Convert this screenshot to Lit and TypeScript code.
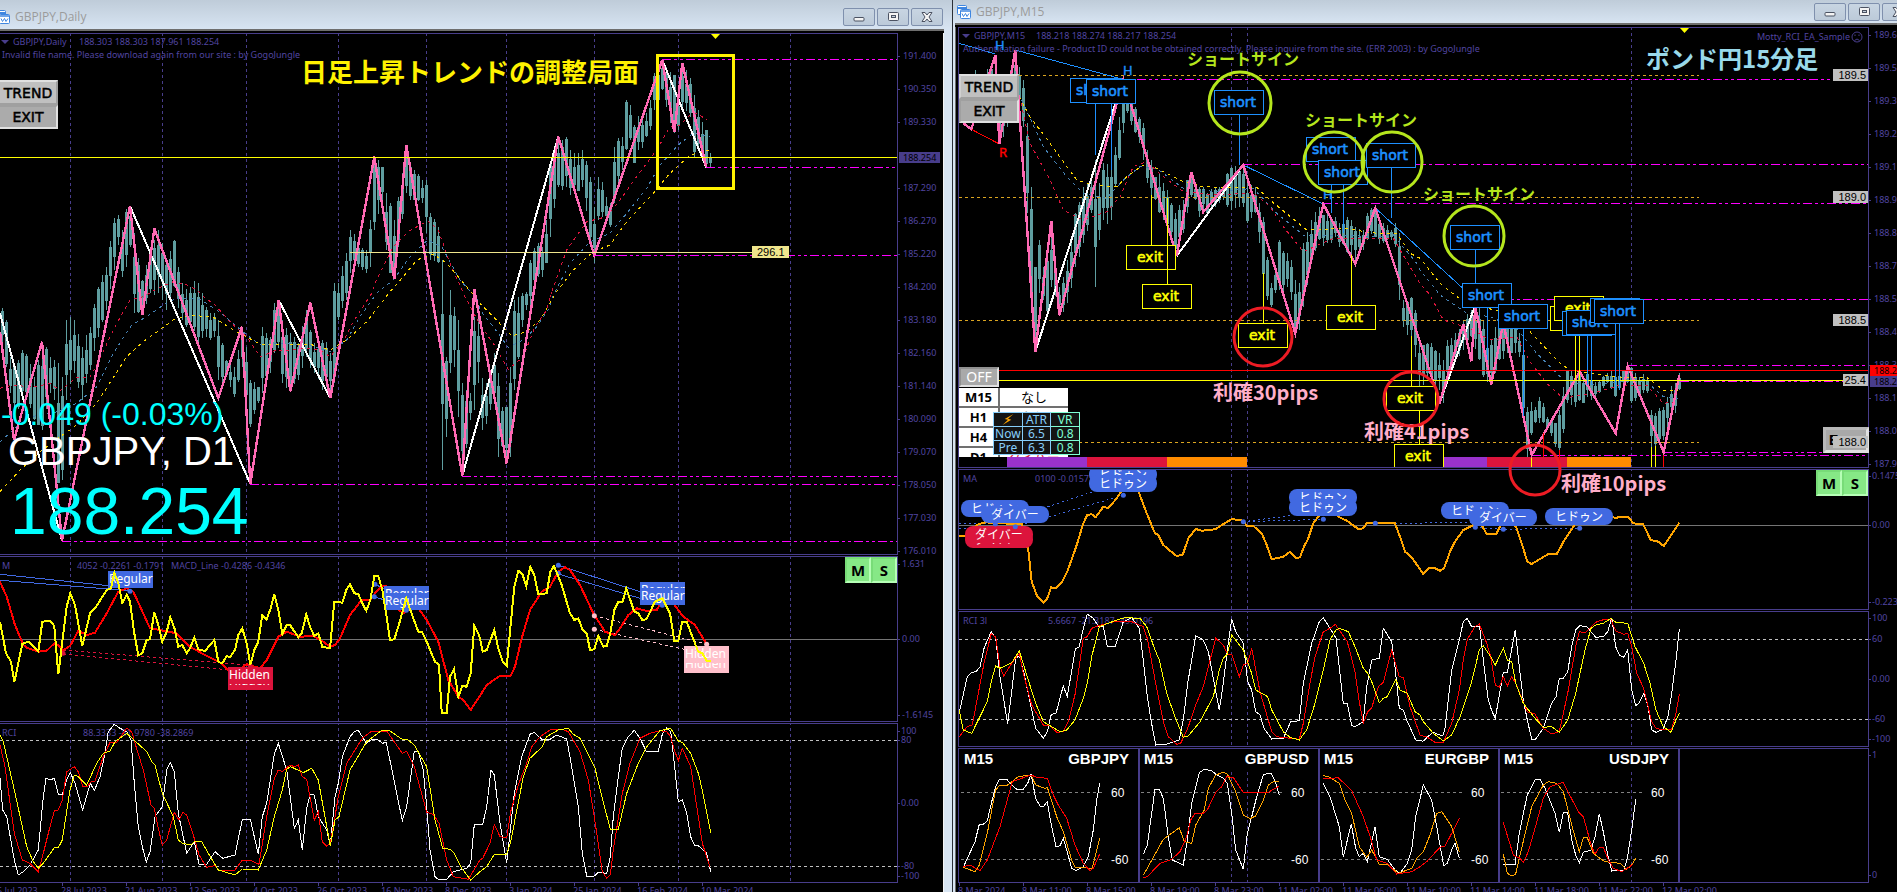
import { LitElement, html, svg, css } from "lit";
import { customElement, property } from "lit/decorators.js";

type Pt = [number, number];

/* Series are stored in thirds of a pixel, relative to an origin in pixels. */
const seg = (ox: number, oy: number, data: string): Pt[] =>
  data
    .trim()
    .split(/\s+/)
    .map((p) => {
      const [x, y] = p.split(",").map(Number);
      return [ox + x / 3, oy + y / 3] as Pt;
    });
const join = (...parts: Pt[][]) =>
  parts
    .flat()
    .map((p) => p[0].toFixed(1) + "," + p[1].toFixed(1))
    .join(" ");
const line = (cls: string, ...parts: Pt[][]) =>
  svg`<polyline class=${"series " + cls} points=${join(...parts)}></polyline>`;
const px = (v: number) => Math.floor(v) + 0.5;
const hline = (cls: string, y: number, x1: number, x2: number) =>
  svg`<line class=${"rule " + cls} x1=${x1} x2=${x2} y1=${px(y)} y2=${px(y)}></line>`;
const vline = (cls: string, x: number, y1: number, y2: number) =>
  svg`<line class=${"rule " + cls} x1=${px(x)} x2=${px(x)} y1=${y1} y2=${y2}></line>`;
const label = (cls: string, x: number, y: number, text: string) =>
  svg`<text class=${cls} x=${x} y=${y}>${text}</text>`;
const dot = (cls: string, p: Pt) => svg`<circle class=${cls} cx=${p[0]} cy=${p[1]} r="2.5"></circle>`;
const at = (ox: number, oy: number, x: number, y: number): Pt => [ox + x / 3, oy + y / 3];

const noise = (n: number) => {
  const s = Math.sin(n * 12.9898) * 43758.5453;
  return s - Math.floor(s);
};

/* Builds candle shapes from x,high,low samples at a 4px pitch. */
const candles = (ox: number, data: string) => {
  const rows = data.trim().split(/\s+/).map((r) => r.split(",").map(Number));
  let d = "";
  let i = 0;
  for (let x = rows[0][0]; x <= rows[rows.length - 1][0]; x += 12) {
    while (i < rows.length - 2 && rows[i + 1][0] <= x) i++;
    const a = rows[i];
    const b = rows[i + 1];
    const t = Math.min(1, (x - a[0]) / (b[0] - a[0]));
    const wob = t > 0 && t < 1 ? (noise(x) - 0.5) * 30 : 0;
    const hi = (a[1] + (b[1] - a[1]) * t + wob) / 3;
    const lo = (a[2] + (b[2] - a[2]) * t + wob) / 3;
    const h = lo - hi;
    const top = hi + h * noise(x + 5) * 0.34;
    const bot = lo - h * noise(x + 9) * 0.32;
    const cx = Math.floor(ox + x / 3);
    d += `M${cx},${Math.round(hi)}h1V${Math.round(lo)}h-1z`;
    d += `M${cx - 1},${Math.round(top)}h3V${Math.max(Math.round(top) + 1, Math.round(bot))}h-3z`;
  }
  return svg`<path class="candle" d=${d}></path>`;
};

/* ---------- daily chart ---------- */

const D_GRID = [70, 162, 246, 338, 426, 506, 594, 678, 790];
const D_CANDLES = `7,925,1040 19,960,1100 31,1070,1180 43,1090,1250 67,1050,1180 103,1130,1260 127,1030,1290
 151,1070,1180 163,1080,1200 175,1090,1450 187,1130,1440 199,960,1200 223,960,1120 247,1040,1200 271,980,1110
 295,860,1010 319,800,930 343,655,810 355,645,735 367,690,830 379,628,800 391,620,740 403,700,940
 427,840,930 451,740,880 475,690,880 499,780,930 523,720,860 547,850,960 571,860,980 595,850,1030
 619,920,1010 643,940,1010 655,960,1140 679,1080,1130 703,1100,1190 727,1000,1100 739,1040,1200 751,1140,1280
 775,1160,1210 787,980,1180 811,1010,1120 823,910,1060 835,905,1045 847,960,1150 871,1000,1170 895,1030,1140
 919,930,1070 943,1030,1120 967,1020,1170 991,1060,1180 1003,850,1150 1015,850,960 1039,760,900
 1051,690,820 1075,740,800 1099,750,820 1111,660,800 1123,470,690 1147,500,600 1159,580,750 1171,610,820
 1183,660,820 1195,590,740 1219,450,580 1243,510,600 1267,540,610 1279,540,700 1291,640,780 1315,680,790
 1327,780,1410 1339,1070,1310 1351,870,1120 1363,920,1100 1375,960,1250 1387,1150,1420 1411,1180,1260 1423,950,1230
 1435,940,1150 1447,1135,1290 1471,1140,1230 1483,1060,1180 1495,1120,1370 1507,1220,1340 1519,1220,1380
 1531,1100,1370 1543,900,1170 1567,880,980 1579,875,930 1591,780,930 1615,730,830 1627,740,830
 1639,660,790 1651,490,710 1675,410,560 1699,410,560 1723,460,580 1747,450,560 1771,530,720 1783,620,790
 1795,530,660 1819,590,670 1831,610,680 1843,440,610 1867,410,510 1879,300,450 1891,315,420 1903,375,490
 1939,340,410 1951,300,390 1963,220,330 1987,185,270 2011,215,370 2023,225,400 2035,310,390 2047,200,330
 2071,235,350 2083,285,470 2095,330,450 2119,390,500 2131,460,500`;

const dailyMain = () => svg`
  ${D_GRID.map((x) => vline("grid", x, 33, 556))}
  ${candles(0, D_CANDLES)}
  ${line("ma red", seg(0, 290, "0,295 40,285 100,292 150,280 180,302 230,262 270,262 300,205 345,110 390,30 430,20 460,3"), seg(0, 0, "480,862 520,845 560,855 590,870 618,897"), seg(0, 290, "640,40 700,105 740,140 780,200 830,180 880,180 920,175 960,180 990,200 1030,155 1060,95 1115,10"), seg(0, 0, "1125,850 1180,740 1225,695 1283,662 1315,690 1350,790 1395,890"), seg(0, 290, "1435,95"), seg(480, 290, "0,105 40,160 85,238 130,200 165,110 200,60 215,5"), seg(480, 0, "210,890 260,750 320,665 380,650 420,600 470,530 530,450 570,380 600,375 635,340 655,342 680,360"))}
  ${line("ma blue", seg(0, 290, "0,455 50,410 110,375 160,370 230,340 290,290 340,190 395,105 440,80 490,45 530,25 600,28 650,60 700,100 740,135 780,165 850,160 930,165 990,185 1040,150 1080,80 1130,10"), seg(0, 0, "1135,875 1180,840 1230,770 1283,720 1325,740 1380,840 1430,895"), seg(480, 290, "0,60 40,110 85,172 130,150 170,110 210,50"), seg(480, 0, "215,895 270,790 330,725 390,700 440,640 500,565 540,495 600,430 640,400 690,410"))}
  ${line("ma gold", seg(0, 290, "0,605 60,540 115,490 160,455 230,405 290,340 380,200 430,155 520,90 570,75 640,82 700,120 780,162 850,162 930,163 990,180 1040,150 1100,95 1170,5"), seg(0, 0, "1210,830 1250,780 1300,762 1340,790 1400,860"), seg(480, 290, "0,40 40,80 95,138 140,125 180,90 230,5"), seg(480, 0, "280,810 340,755 390,735 440,665 520,580 570,520 630,465 690,450"))}
  ${line("white2", seg(0, 290, "0,70 186,752"))}
  ${line("white2", seg(0, 0, "390,618"), seg(0, 290, "751,582"))}
  ${line("white2", seg(0, 290, "836,31 991,324"))}
  ${line("white2", seg(0, 290, "1387,557"), seg(480, 0, "235,410"))}
  ${line("white2", seg(480, 0, "547,180 679,502"))}
  ${line("zig", seg(0, 290, "0,125 42,450 126,155 186,752"), seg(0, 0, "390,618"), seg(0, 290, "427,76"), seg(0, 0, "463,686"), seg(0, 290, "655,324 726,110 751,582 836,31 871,304 931,38 991,324"), seg(0, 0, "1123,470 1183,838 1219,434"), seg(0, 290, "1387,557"), seg(0, 0, "1423,868"), seg(480, 290, "80,520"), seg(480, 0, "235,410 343,766 547,180 583,397 607,190 679,502"))}
  ${hline("magenta", 59, 662, 898)} ${hline("magenta", 167, 706, 898)}
  ${hline("magenta", 255, 594, 898)} ${hline("magenta", 476, 462, 898)}
  ${hline("magenta", 484, 250, 898)} ${hline("magenta", 541, 62, 898)}
  ${hline("khaki", 252, 350, 752)}
  ${hline("yellow", 157, 0, 898)}
  <rect class="tag-khaki" x="752" y="246" width="37" height="12"></rect>
  ${label("arial11 black", 757, 256, "296.1")}
  <path class="fill-yellow" d="M711,34h9l-4.500,5z"></path>
  <path class="fill-dim" d="M1,40h8l-4,4z"></path>
  ${label("tiny", 13, 45, "GBPJPY,Daily")}
  ${label("tiny", 79, 45, "188.303 188.303 187.961 188.254")}
  ${label("tiny", 2, 58, "Invalid file name. Please download again from our site : by GogoJungle")}
  ${label("quote32 cyan", 1, 425, "-0.049 (-0.03%)")}
  ${label("quote40 white", 8, 465, "GBPJPY, D1")}
  ${label("quote66 cyan", 10, 534, "188.254")}`;

const tagBox = (cls: string, x: number, y: number, text: string) => svg`
  <rect class=${cls} x=${x} y=${y} width="45" height="17"></rect>
  ${label("noto12 white", x + 1, y + 12, text)}`;

const dailyMacd = () => svg`
  ${D_GRID.map((x) => vline("grid", x, 556, 722))}
  ${hline("zero", 639, 0, 898)}
  ${line("s-royal", seg(0, 550, "0,73 355,110"))} ${line("s-royal", seg(0, 550, "0,91 390,122"))}
  ${line("s-royal", seg(0, 550, "1123,103 1170,122"))} ${line("s-royal", seg(0, 550, "1123,140 1170,155"))}
  ${line("s-royal", seg(480, 550, "235,46 480,125"))} ${line("s-royal", seg(480, 550, "235,72 490,148"))}
  ${line("s-crim", seg(0, 550, "190,300 740,345"))} ${line("s-crim", seg(0, 550, "190,312 690,360"))}
  ${line("s-pink", seg(480, 550, "343,197 680,283"))} ${line("s-pink", seg(480, 550, "343,238 612,298"))}
  ${line("red2", seg(0, 550, "0,95 20,140 45,225 70,285 80,293 115,305 140,302 165,278 190,300 210,288 235,243 262,255 285,248 320,190 355,125 380,115 400,125 425,180 450,235 490,242 530,250 570,290 620,318 665,340 685,360 710,365 740,343 780,355 800,330 835,260 860,245 900,260 940,258 970,275 990,290 1005,285 1020,265 1050,195 1085,150 1110,150 1125,130 1147,107 1165,110 1190,175 1210,190 1230,175 1255,175 1280,210 1315,275 1345,390 1375,440 1390,450 1412,480"), seg(480, 550, "0,437 20,405 60,377 92,377 105,350 125,265 150,180 185,125 210,110 235,65 255,52 270,60 300,105 340,190 375,245 405,255 420,235 445,195 470,175 500,183 530,180 545,155 580,160 610,200 645,225 680,283"))}
  ${tagBox("f-royal", 108, 571, "Regular")}
  ${tagBox("f-royal", 384, 586, "Regular")} ${tagBox("f-royal", 384, 593, "Regular")}
  ${tagBox("f-royal", 640, 582, "Regular")} ${tagBox("f-royal", 640, 588, "Regular")}
  ${tagBox("f-crim", 228, 673, "Hidden")} ${tagBox("f-crim", 228, 667, "Hidden")}
  ${tagBox("f-pink", 684, 656, "Hidden")} ${tagBox("f-pink", 684, 646, "Hidden")}
  ${[at(0, 550, 390, 124), at(0, 550, 1125, 103), at(0, 550, 1123, 140), at(0, 550, 1219, 181), at(480, 550, 235, 46), at(480, 550, 235, 70), at(480, 550, 547, 166)].map((p) => dot("f-royal", p))}
  ${[at(480, 550, 343, 197), at(480, 550, 343, 238), at(480, 550, 680, 283)].map((p) => dot("f-pink", p))}
  ${[at(0, 550, 189, 310), at(0, 550, 751, 348)].map((p) => dot("f-crim", p))}
  ${line("yel2", seg(0, 550, "0,215 18,310 33,335 43,397 67,282 85,275 115,305 127,215 150,212 163,228 175,373 200,170 211,130 225,165 247,288 271,187 285,175 320,120 333,115 343,68 355,100 367,158 380,135 390,155 403,250 415,316 427,310 440,270 450,268 463,187 475,225 487,275 500,245 511,202 525,240 535,290 547,285 560,310 570,295 583,263 595,298 615,303 643,270 655,335 667,340 680,318 690,322 705,300 715,255 727,235 740,280 751,345 763,300 775,275 787,195 800,208 812,175 823,133 835,180 847,252 860,225 870,225 895,262 905,250 919,193 930,230 943,258 955,250 967,290 990,295 1003,155 1027,158 1039,120 1050,103 1063,130 1075,132 1087,160 1099,182 1111,150 1123,78 1135,78 1147,120 1159,195 1170,270 1183,268 1195,230 1219,145 1231,180 1255,245 1267,247 1280,275 1305,335 1317,345 1325,488 1340,488 1350,380 1362,358 1375,440 1387,408 1400,410 1412,370 1423,228 1435,250"), seg(480, 550, "0,265 8,305 20,300 43,240 55,295 67,332 80,348 103,110 115,62 127,72 139,108 151,50 163,75 175,133 200,130 211,65 222,48 245,105 270,190 283,210 295,205 307,237 320,250 330,300 343,298 355,258 370,290 380,288 391,250 403,180 415,155 428,155 439,115 463,185 475,190 487,210 499,208 525,155 547,145 570,190 583,272 595,272 607,215 620,215 643,275 655,305 667,310 680,332 692,332"))}
  ${label("tiny", 2, 569, "M")}
  ${label("tiny", 77, 569, "4052 -0.2261 -0.1791")}
  ${label("tiny", 171, 569, "MACD_Line -0.4286 -0.4346")}`;

const dailyRci = () => svg`
  ${D_GRID.map((x) => vline("grid", x, 722, 884))}
  ${label("tiny", 2, 736, "RCI")} ${label("tiny", 83, 736, "88.3333 -81.9780 -38.2869")}
  ${hline("level", 740, 0, 898)} ${hline("level", 866, 0, 898)}
  ${line("white1", seg(0, 550, "0,685 8,780 20,800 43,930 55,975 70,965 90,945 115,900 130,740 138,685 150,690 163,685 175,733 187,733 200,690 211,668 225,700 248,780 271,700 283,722 300,680 313,620 325,545 343,523 360,535 380,545 393,570 403,700 415,830 427,890 439,937 450,905 465,800 487,770 500,660 511,638 523,665 535,790 560,910 583,875 597,943 620,943 645,905 668,925 705,915 727,808 751,808 775,913 787,800 800,760 823,612 835,580 860,660 883,835 895,810 907,900 920,775 931,733 943,735 955,800 980,840 991,885 1005,740 1015,700 1027,620 1050,560 1063,545 1075,541 1099,580 1115,568 1135,570 1147,580 1159,577 1207,812 1220,770 1243,603 1255,605 1270,660 1280,770 1290,900 1305,980 1317,990 1340,988 1360,965 1400,955 1412,940 1423,823 1440,823"), seg(480, 550, "8,823 20,770 33,660 43,675 60,820 80,940 103,730 125,620 150,553 163,547 185,568 210,568 230,555 260,567 275,650 295,770 307,910 320,978 343,978 355,967 380,970 391,920 400,800 415,680 427,595 445,560 463,541 480,565 499,604 535,604 547,553 560,533 572,545 585,660 595,755 607,750 620,790 632,860 643,885 655,887 680,910 692,965"))}
  ${line("red1", seg(0, 550, "0,585 15,650 43,850 67,930 90,940 115,965 130,910 150,830 163,783 175,780 187,750 200,665 223,650 235,665 248,710 262,710 275,693 285,693 310,620 330,577 350,577 380,535 395,545 405,580 430,660 453,765 463,775 475,835 487,885 500,870 523,787 537,810 548,787 560,795 583,865 597,915 620,952 645,947 660,963 705,960 727,930 751,930 777,943 800,800 823,685 835,660 847,665 870,645 883,650 895,645 907,680 920,688 943,810 955,785 967,875 980,888 991,880 1005,800 1015,740 1040,640 1087,565 1115,543 1160,543 1207,610 1220,603 1243,650 1280,787 1300,793 1317,820 1340,930 1360,980 1405,988 1440,930"), seg(480, 550, "8,925 30,880 43,823 60,860 80,863 92,785 115,705 140,640 155,590 180,560 210,540 245,537 265,545 300,605 325,690 343,800 367,965 380,985 391,975 400,900 427,730 450,640 480,565 510,550 540,542 560,545 572,560 583,600 595,632 607,595 632,650 655,800 667,880 690,950"))}
  ${line("yel1", seg(0, 550, "0,555 10,575 43,720 80,890 100,935 115,955 130,940 163,893 175,893 187,870 210,720 223,675 235,680 260,705 290,640 310,610 330,603 345,575 380,550 400,568 440,605 455,635 465,645 487,730 520,800 535,870 548,880 572,885 583,875 605,875 625,910 655,960 705,975 727,957 775,960 800,900 823,800 847,720 860,657 872,650 910,668 935,655 955,690 991,888 1005,810 1017,800 1050,660 1100,575 1145,541 1170,543 1205,567 1220,567 1243,585 1280,650 1305,810 1328,895 1350,898 1362,910 1385,955 1412,990 1440,965"), seg(480, 550, "20,950 43,913 80,913 92,875 130,680 150,625 187,590 200,560 235,540 265,535 280,553 300,565 345,655 367,745 391,838 415,838 440,730 475,640 500,590 540,542 572,535 595,573 607,577 632,610 655,670 667,720 692,848"))}`;

/* ---------- 15 minute chart ---------- */

const M_GRID = [1231, 1247, 1631];
const M_CANDLES = `76,210,340 88,230,350 100,240,330 124,200,290 148,240,420 172,250,380 196,190,300 208,200,300
 220,240,380 232,370,640 244,560,890 256,800,1030 268,720,880 280,800,900 292,780,950
 304,700,860 328,860,940 352,780,910 376,640,800 400,560,730 424,530,640 436,480,860 448,550,720 460,490,660
 484,470,660 496,440,560 508,350,480 520,300,400 532,270,340 556,320,400 568,350,430 580,370,480 592,450,550
 604,480,590 616,530,600 628,520,640 640,550,660 652,570,700 664,610,710 676,640,770 700,600,700 712,540,640
 724,530,590 736,560,600 748,560,650 772,580,640 796,560,620 820,560,600 832,520,620 844,500,630 868,500,620
 880,510,620 892,550,670 916,560,640 928,610,730 940,650,850 952,770,900 964,850,920 976,810,880 988,720,870
 1012,760,860 1024,780,900 1036,840,980 1048,850,990 1060,730,920 1084,660,790 1108,620,720 1132,640,730
 1156,650,710 1168,670,740 1192,650,760 1216,680,780 1240,690,750 1252,640,720 1276,630,710 1300,670,730
 1324,690,720 1336,670,740 1348,700,900 1360,900,980 1384,890,1010 1396,930,1070 1408,1020,1160 1432,1030,1130
 1444,1030,1140 1468,1060,1170 1480,1080,1210 1492,1020,1130 1516,1000,1070 1540,960,1050 1564,930,1010
 1588,920,1080 1600,960,1130 1624,1020,1150 1648,930,1080 1672,950,1060 1684,950,1060 1708,1000,1070
 1720,1060,1260 1732,1220,1370 1756,1220,1270 1768,1190,1270 1792,1250,1290 1816,1270,1340 1828,1230,1360
 1840,1160,1300 1852,1110,1210 1876,1110,1220 1900,1130,1210 1924,1140,1200 1948,1140,1180 1972,1120,1150
 1996,1110,1190 2020,1110,1150 2032,1100,1150 2044,1100,1210 2068,1130,1190 2092,1130,1180 2104,1230,1340
 2116,1240,1340 2140,1220,1320 2152,1190,1280 2176,1150,1240 2188,1120,1170`;

const signal = (kind: "short" | "exit", x: number, y: number) => svg`
  <rect class=${"signal " + kind} x=${x + 0.5} y=${y + 0.5} width="49" height="24" rx="1"></rect>
  ${label("sigtext t-" + kind, kind === "short" ? x + 6 : x + 11, y + 17, kind)}`;

const priceTag = (x: number, y: number, w: number, text: string) => svg`
  <rect class="tag-silver" x=${x} y=${y} width=${w} height="12"></rect>
  ${label("arial11 black end", x + w - 2, y + 10, text)}`;

const m15Main = () => svg`
  ${M_GRID.map((x) => vline("grid", x, 27, 470))}
  <path class="fill-dim" d="M962,34h8l-4,4z"></path>
  ${label("tiny end", 1850, 40, "Motty_RCI_EA_Sample")}
  <circle class="face" cx="1857" cy="37" r="5"></circle>
  <path class="face" d="M1854.500,40.500q2.500,-3 5,0M1855,34.500v1.500M1859,34.500v1.500"></path>
  <path class="fill-yellow" d="M1680,28h9l-4.500,5z"></path>
  ${candles(950, M_CANDLES)}
  ${[75, 197, 320, 442].map((y) => hline("golden", y, 959, 1699))}
  ${line("ma gold", seg(950, 0, "207,290 240,350 300,430 380,540 430,555 500,560 530,530 580,495 620,505 700,545 760,560 830,563 920,562 960,600 1070,690 1180,685 1280,700 1340,700 1380,760"), seg(1420, 0, "0,775 60,850 110,890"), seg(1420, 290, "200,55 280,70 330,125 420,220 450,240 520,250 600,262 680,262 730,300 775,300"))}
  ${line("ma blue", seg(950, 0, "215,300 280,440 350,530 400,580 470,595 520,540 570,500 620,505 700,565 800,575 910,565 980,640 1060,705 1150,705 1280,710 1330,705 1400,790"), seg(1420, 0, "0,810 60,885"), seg(1420, 290, "140,70 210,80 290,115 350,190 430,270 500,285 600,275 680,275 730,320 775,325"))}
  ${line("ma red", seg(950, 0, "213,310 240,430 300,540 340,630 400,660 470,635 510,590 550,500 590,485 640,530 700,575 800,585 910,578 960,620 1000,680 1060,755 1150,715 1280,715 1330,715 1380,800"), seg(1420, 0, "0,850 30,885"), seg(1420, 290, "70,90 150,115 210,150 290,140 330,215 380,280 430,325 520,310 600,285 680,285 730,340 775,335"))}
  ${hline("magenta", 79, 1137, 1868)} ${hline("magenta", 164, 1243, 1868)} ${hline("magenta", 203, 1323, 1868)}
  ${hline("magenta", 299, 1475, 1868)} ${hline("magenta", 365, 1628, 1868)} ${hline("magenta", 381, 1680, 1868)}
  ${hline("magenta", 452, 1663, 1868)} ${hline("magenta", 455, 1532, 1868)}
  <rect class="b-purple" x="1007" y="457" width="80" height="10"></rect>
  <rect class="f-crim" x="1087" y="457" width="80" height="10"></rect>
  <rect class="b-orange" x="1167" y="457" width="80" height="10"></rect>
  <rect class="b-purple" x="1407" y="457" width="80" height="10"></rect>
  <rect class="f-crim" x="1487" y="457" width="80" height="10"></rect>
  <rect class="b-orange" x="1567" y="457" width="64" height="10"></rect>
  ${line("s-dodger", seg(950, 0, "27,130 136,162"))} ${line("s-dodger", seg(950, 0, "196,150 515,237"))}
  ${line("s-dodger", seg(950, 0, "880,495 1120,612"))} ${line("s-dodger", seg(950, 0, "1276,624 1535,862"))}
  ${line("red1", seg(950, 0, "64,388 148,432"))}
  ${line("white2", seg(950, 290, "256,185"), seg(950, 0, "520,238"))}
  ${line("white2", seg(950, 0, "680,768 880,495"))} ${line("white2", seg(1420, 290, "60,335 166,45"))}
  ${line("zig", seg(950, 0, "40,370 64,388 136,165 148,432 196,150"), seg(950, 290, "256,185"), seg(950, 0, "304,662"), seg(950, 290, "328,76"), seg(950, 0, "520,238 680,768 724,516 760,636 880,495"), seg(950, 290, "1036,130"), seg(950, 0, "1120,612 1216,792 1276,624"), seg(1420, 290, "60,335 130,102 154,214 166,50 214,283 250,100 335,495 479,245 587,430 623,228 731,487 778,256"))}
  ${label("tiny", 974, 39, "GBPJPY,M15")} ${label("tiny", 1036, 39, "188.218 188.274 188.217 188.254")}
  ${label("tiny", 963, 52, "Authentication failure - Product ID could not be obtained correctly. Please inquire from the site. (ERR 2003) : by GogoJungle")}
  ${label("hr dodger", 995, 50, "H")} ${label("hr dodger", 1123, 75, "H")} ${label("hr dodger", 1323, 199, "H")}
  ${label("hr redtext", 999, 157, "R")}
  ${hline("red", 370, 999, 1868)} ${hline("yellow", 380, 999, 1868)}
  ${vline("blue", 1095, 103, 155)} ${vline("blue", 1111, 103, 170)} ${vline("blue", 1239, 115, 165)}
  ${vline("blue", 1331, 185, 213)} ${vline("blue", 1343, 185, 233)} ${vline("blue", 1391, 168, 218)}
  ${vline("blue", 1475, 249, 284)} ${vline("blue", 1487, 307, 360)} ${vline("blue", 1523, 328, 416)}
  ${vline("blue", 1587, 335, 385)} ${vline("blue", 1591, 335, 385)} ${vline("blue", 1615, 323, 390)} ${vline("blue", 1619, 323, 390)}
  ${vline("yellow", 1151, 195, 246)} ${vline("yellow", 1263, 273, 324)} ${vline("yellow", 1351, 255, 305)}
  ${vline("yellow", 1411, 336, 387)} ${vline("yellow", 1419, 411, 444)} ${vline("yellow", 1575, 331, 380)} ${vline("yellow", 1579, 331, 380)}
  ${vline("yellow", 1651, 447, 467)} ${vline("yellow", 1655, 446, 467)} ${vline("yellow", 1531, 458, 467)}
  ${vline("red", 1543, 433, 457)} ${vline("red", 1559, 450, 467)} ${vline("red", 1663, 455, 467)}
  ${signal("short", 1070, 78)} ${signal("short", 1086, 79)} ${signal("short", 1214, 90)}
  ${signal("short", 1306, 137)} ${signal("short", 1318, 160)} ${signal("short", 1366, 143)}
  ${signal("short", 1450, 225)} ${signal("short", 1462, 283)} ${signal("short", 1498, 304)}
  ${signal("exit", 1550, 306)} ${signal("exit", 1554, 296)} ${signal("short", 1562, 311)} ${signal("short", 1566, 310)}
  ${signal("short", 1590, 298)} ${signal("short", 1594, 299)}
  ${signal("exit", 1126, 245)} ${vline("yellow", 1167, 198, 284)} ${signal("exit", 1142, 284)}
  ${signal("exit", 1238, 323)} ${signal("exit", 1326, 305)} ${signal("exit", 1386, 386)} ${signal("exit", 1394, 444)}
  ${priceTag(1833, 69, 35, "189.5")} ${priceTag(1833, 191, 35, "189.0")}
  ${priceTag(1833, 314, 35, "188.5")} ${priceTag(1843, 374, 25, "25.4")}`;

const pill = (cls: string, x: number, y: number, text: string) => svg`
  <rect class=${cls} x=${x} y=${y} width="68" height="17" rx="8"></rect>
  ${label("kana12 white mid", x + 34, y + 13, text)}`;

const m15Ma = () => svg`
  ${M_GRID.map((x) => vline("grid", x, 468, 611))}
  ${label("tiny", 963, 482, "MA")} ${label("tiny", 1035, 482, "0100 -0.0157")}
  ${hline("zero", 525, 959, 1868)}
  ${["27,715 196,708", "27,700 130,700", "136,702 430,605", "196,710 520,616", "880,695 1020,677", "880,695 1120,688", "1276,700 1576,698", "1576,712 1660,718 1889,715"].map((d) => line("s-royaldash", seg(950, 290, d)))}
  ${line("ora2", seg(950, 290, "27,738 45,737 80,705 105,697 150,700 215,702 232,770"), seg(950, 550, "235,0 245,95 262,140 280,157 292,145 303,112 318,115 335,98 352,65 375,0"), seg(950, 290, "385,750 400,700 412,675 425,673 437,682 460,650 475,655 500,625 515,603 540,560 565,603 590,670 615,730 625,735 640,765 655,778"), seg(950, 550, "680,18 695,15"), seg(950, 290, "700,790 715,745 737,717 755,722 795,718 845,687 880,692 890,708 910,708 935,730 950,765"), seg(950, 550, "965,28 1000,20 1020,5 1040,25 1050,22 1062,-10"), seg(950, 290, "1075,745 1090,700 1105,680 1135,650 1165,680 1190,692 1225,717 1240,715 1250,700 1335,700 1350,740"), seg(950, 550, "1365,5 1385,22 1420,72"), seg(1420, 550, "25,55 45,55 60,62 72,55 92,0"), seg(1420, 290, "105,755 130,720 160,705 185,705 200,733 228,733 243,705 265,690 288,710 305,760"), seg(1420, 550, "322,35 335,42 385,12 410,12 420,-5"), seg(1420, 290, "430,755 450,725 470,695 500,670 585,683 625,680 640,700 670,703 692,750 715,755 731,768 750,740 778,698"))}
  ${pill("f-royal", 961, 500, "ヒドゥン")} ${pill("f-royal", 981, 506, "ダイバー")}
  ${pill("f-crim", 965, 531, "ダイバー")} ${pill("f-crim", 965, 526, "ダイバー")}
  ${pill("f-royal", 1089, 466, "ヒドゥン")} ${pill("f-royal", 1089, 475, "ヒドゥン")}
  ${pill("f-royal", 1289, 489, "ヒドゥン")} ${pill("f-royal", 1289, 499, "ヒドゥン")}
  ${pill("f-royal", 1441, 502, "ヒドゥン")} ${pill("f-royal", 1469, 509, "ダイバー")}
  ${pill("f-royal", 1545, 508, "ヒドゥン")}
  ${["136,702", "196,710", "520,616", "880,695", "1120,688", "1276,700", "1576,712", "1660,718", "1889,715"].map((d) => dot("f-royal", seg(950, 290, d)[0]))}`;

const m15Rci = () => svg`
  ${M_GRID.map((x) => vline("grid", x, 610, 748))}
  ${label("tiny", 963, 624, "RCI 3l")} ${label("tiny", 1048, 624, "5.6667 -21.3187 -49.0196")}
  ${hline("level", 639, 959, 1868)} ${hline("level", 719, 959, 1868)}
  ${line("white1", seg(950, 550, "28,487 52,380 65,367 78,365 90,350 103,292 124,245 137,265 150,380 173,522 197,325 208,317 222,370 245,480 257,535 280,565 292,545 304,493 318,490 340,407 352,440 376,297 388,290 400,235 412,193 430,205 445,228 460,228 472,288 496,288 520,215 545,203 568,235 580,330 592,440 604,515 617,585 650,582 688,570 700,510 713,400 737,257 760,270 775,305 808,480 820,400 832,300 845,208 857,245 880,280 893,395 905,420 917,485 930,495 942,535 965,567 1000,565 1022,515 1048,512 1060,400 1085,280 1108,215 1120,203 1140,235 1158,265 1180,460 1192,460 1205,527 1215,530 1240,515 1250,410 1265,330 1288,325 1300,235 1325,275 1335,350 1348,475 1360,480 1370,510 1397,570 1415,573"), seg(1420, 550, "10,573 38,547 68,558 75,535 95,360 118,270 130,215 142,205 154,228 179,230 190,330 205,450 215,482 226,505 250,368 262,368 286,240 298,350 310,450 322,510 335,568 345,570 370,535 395,460 408,440 418,385 430,385 443,365 455,290 467,240 480,227 500,230 527,262 550,260 563,245 575,203 587,290 598,315 612,322 623,300 635,420 647,467 658,458 671,430 683,465 695,540 708,547 730,538 745,495 755,430 768,330 778,238"))}
  ${line("red1", seg(950, 550, "28,560 52,530 67,525 85,430 103,335 124,250 137,262 150,350 161,378 185,340 208,310 220,370 245,465 280,525 300,528 320,547 340,545 355,515 376,430 400,265 412,260 425,235 445,227 500,213 545,215 580,230 592,265 617,400 640,515 655,560 680,583 692,580 713,535 737,465 760,410 797,265 820,285 832,312 845,312 868,380 880,345 893,340 905,295 930,425 965,545 980,560 1048,568 1060,520 1080,400 1095,320 1120,245 1140,235 1156,223 1192,275 1215,365 1227,450 1240,520 1253,485 1265,473 1285,410 1300,397 1325,300 1348,380 1360,382 1380,470 1410,555"), seg(1420, 550, "5,557 20,560 45,577 70,577 95,520 118,420 130,330 142,268 165,230 178,222 200,280 212,320 226,405 238,412 250,380 262,408 275,380 287,400 322,485 345,492 370,535 395,552 418,545 443,430 467,290 478,245 495,248 530,215 555,208 572,208 587,243 612,253 623,250 635,290 650,370 671,415 695,515 708,535 730,540 745,537 755,538 768,490 778,433"))}
  ${line("yel1", seg(950, 550, "28,480 40,540 65,550 85,510 112,455 125,390 137,348 150,355 185,338 208,303 233,385 257,460 280,515 330,545 350,540 375,510 400,445 412,400 425,320 448,230 500,210 525,203 570,205 590,230 615,300 628,330 650,430 675,500 700,562 715,558 750,515 790,440 808,360 820,325 832,312 845,255 880,300 905,370 917,420 953,440 965,480 1000,545 1020,562 1048,570 1070,540 1095,460 1120,360 1140,270 1158,240 1168,235 1195,245 1215,290 1240,355 1253,370 1265,395 1288,458 1300,445 1312,440 1337,388 1350,420 1372,430 1395,485 1410,495"), seg(1420, 550, "10,515 40,550 70,573 95,555 120,500 154,400 178,300 190,287 212,320 226,345 250,295 262,330 275,335 287,400 310,460 345,505 370,532 395,530 418,547 443,510 467,430 495,300 513,235 527,225 550,220 573,205 587,217 623,220 645,290 671,340 690,400 708,480 730,530 753,547 768,510 778,490"))}`;

const PAIRS = [
  {
    name: "GBPJPY",
    white: "40,952 75,875 88,823 100,823 112,812 125,755 137,710 148,688 170,688 180,700 200,718 220,718 233,700 243,672 257,745 270,768 280,770 292,755 303,820 318,890 330,887 340,865 350,900 365,955 378,962 400,950 415,920 430,840 440,750 449,700",
    orange: "40,952 75,965 88,945 112,850 125,780 137,720 148,707 170,707 205,680 243,675 257,705 285,715 292,712 320,800 340,845 365,930 375,952 427,955 440,900 449,865",
    red: "40,950 60,945 90,962 112,930 150,830 187,695 220,683 243,675 260,682 292,685 310,735 325,765 350,805 375,885 400,940 420,962 430,955 449,912",
  },
  {
    name: "GBPUSD",
    white: "580,913 592,885 615,718 628,718 640,745 655,860 667,930 700,945 712,870 725,760 748,668 763,658 785,662 800,675 820,685 832,700 845,790 857,900 880,958 892,850 905,800 920,740 940,675 955,670 965,672 977,700 988,735",
    orange: "580,975 592,955 640,868 688,833 703,875 725,880 737,825 763,780 775,715 797,675 820,667 832,672 857,725 880,795 900,806 917,798 940,750 955,705 970,695 988,693",
    red: "580,983 592,980 630,940 665,928 690,905 710,860 722,810 735,790 760,790 773,778 797,727 815,710 830,680 850,682 880,727 955,727 988,708",
  },
  {
    name: "EURGBP",
    white: "1120,700 1140,740 1168,830 1180,920 1204,822 1217,895 1228,920 1240,910 1252,935 1275,830 1288,920 1312,928 1335,960 1350,970 1372,940 1385,900 1397,800 1420,705 1445,750 1460,830 1481,947 1492,940 1505,900 1515,880 1528,925",
    orange: "1120,677 1135,680 1168,700 1185,750 1205,790 1228,890 1250,922 1265,900 1288,943 1315,945 1345,970 1385,955 1400,925 1420,905 1440,855 1460,790 1475,785 1505,830 1528,905",
    red: "1120,687 1165,683 1205,722 1240,800 1262,865 1280,930 1312,940 1340,972 1385,965 1410,950 1430,935 1470,892 1485,888 1505,850 1528,805",
  },
  {
    name: "USDJPY",
    white: "1660,943 1695,945 1708,850 1720,790 1732,735 1755,690 1770,688 1785,715 1815,790 1828,847 1840,788 1853,788 1865,870 1877,915 1888,938 1900,907 1923,900 1935,860 1948,792 1960,845 1973,915 1985,963 2022,960 2032,925 2045,840 2057,748",
    orange: "1660,912 1672,970 1685,978 1697,972 1710,915 1745,770 1780,705 1795,695 1820,700 1840,725 1865,825 1888,905 1900,863 1912,863 1930,910 1950,925 1965,935 2010,940 2030,958 2045,945 2057,925",
    red: "1660,817 1690,915 1710,925 1720,938 1735,905 1755,835 1780,745 1800,710 1840,697 1855,727 1885,785 1900,800 1925,890 1935,912 1948,892 1960,892 1973,925 1990,955 2015,965 2050,943",
  },
];

const m15Pairs = () => svg`
  ${M_GRID.map((x) => vline("grid", x, 772, 883))}
  ${PAIRS.map((p, i) => {
    const x = 959 + i * 180;
    return svg`
      <rect class="divider" x=${x + 179} y="748" width="2" height="135"></rect>
      ${hline("sublevel", 792, x + 2, x + 145)} ${hline("sublevel", 859, x + 2, x + 145)}
      ${line("white1", seg(950, 550, p.white))} ${line("ora1", seg(950, 550, p.orange))} ${line("red1", seg(950, 550, p.red))}
      ${label("arialb15 white", x + 5, 764, "M15")} ${label("arialb15 white end", x + 170, 764, p.name)}
      ${label("arial12 white", x + 152, 797, "60")} ${label("arial12 white", x + 152, 864, "-60")}`;
  })}`;

/* ---------- axes ---------- */

type Tick = [number, string];
const scale = (x: number, inset: number, ticks: Tick[]) => svg`
  ${ticks.map(([y, t]) => svg`${hline("tick", y, x, x + 2)}${label("tiny", x + inset, y + 3, t)}`)}`;

const D_SCALE: Tick[] = [191.4, 190.35, 189.33, 0, 187.29, 186.27, 185.22, 184.2, 183.18, 182.16, 181.14, 180.09, 179.07, 178.05, 177.03, 176.01]
  .map((v, i) => [56 + i * 33, v ? v.toFixed(3) : ""] as Tick);
const M_SCALE: Tick[] = ["189.6", "189.5", "189.3", "189.2", "189.1", "188.9", "188.8", "188.7", "188.5", "188.4", "188.3", "188.1", "188.0", "187.9"]
  .map((t, i) => [35 + (i > 9 && i < 11 ? i : i) * 33, t] as Tick);

const badge = (cls: string, x: number, y: number, w: number, text: string) => svg`
  <rect class=${cls} x=${x} y=${y} width=${w} height="11"></rect>
  ${label("tiny black", x + 4, y + 9, text)}`;

const pane = (ox: number, oy: number, plot: unknown, ax: number, ay: number, axis: unknown, extra: unknown = "") => html`
  <div class="pane">
    <svg class="plot"><g transform=${`translate(${-ox} ${-oy})`}>${plot}</g></svg>
    <svg class="axis"><g transform=${`translate(${-ax} ${-ay})`}>${axis}</g></svg>
    ${extra}
  </div>`;

const ms = () => html`<div class="ms"><button type="button">M</button><button type="button">S</button></div>`;

const timeline = (ox: number, start: number, labels: string[]) => html`
  <svg class="time"><g transform=${`translate(${-ox} -883)`}>
    ${labels.map((t, i) => svg`${vline("tick", start + i * 64, 883, 886)}${label("tiny", start + i * 64 - 1, 894, t)}`)}
  </g></svg>`;

@customElement("chart-window")
export class ChartWindow extends LitElement {
  @property() heading = "";

  static styles = css`
    :host { display: flex; flex-direction: column; min-width: 0; overflow: hidden; background: #d7e4f2; }
    .title {
      display: flex; align-items: center; flex: none; box-sizing: border-box;
      height: var(--title-height); padding-top: var(--title-top); padding-left: var(--title-pad); overflow: hidden;
      background: linear-gradient(#bfccd9, #d7e4f2);
      font: 12px/16px "Open Sans", sans-serif; color: #9b9b9b;
    }
    .icon { flex: none; width: 14px; height: 14px; margin-right: 5px; margin-left: var(--icon-shift); }
    .name { flex: 1; white-space: nowrap; }
    .controls { display: flex; flex: none; gap: 2px; margin-right: var(--controls-right); }
    button {
      width: 32px; height: 18px; padding: 0; box-sizing: border-box; border: 1px solid #7f90ad; border-radius: 2px;
      background: linear-gradient(#c8d5e2, #bccad9); display: flex; align-items: center; justify-content: center;
    }
    button svg { flex: none; width: 14px; height: 12px; fill: #f4f4f4; stroke: #4b5262; }
    .body { flex: 1; display: flex; min-height: 0; border-top: 2px solid #6e6e6e; background: #000; padding-top: 2px; margin: var(--body-margin); }
  `;

  render() {
    return html`
      <div class="title">
        <svg class="icon" viewBox="0 0 14 14" fill="#fff" stroke="#3f86e0">
          <rect x=".5" y=".5" width="9" height="9" rx="1"></rect><path d="M1 3h8" stroke-width="2"></path>
          <rect x="3.500" y="4.500" width="10" height="9" rx="1"></rect>
          <path d="M4 6h9" stroke-width="1.500"></path><path d="M5 8.500l1.500 3 2-3 1.500 3 2-3" fill="none"></path>
        </svg>
        <span class="name">${this.heading}</span>
        <div class="controls">
          <button type="button" aria-label="Minimize"><svg viewBox="0 0 14 12"><rect x="2" y="6.500" width="10" height="3.500" rx="1"></rect></svg></button>
          <button type="button" aria-label="Restore"><svg viewBox="0 0 14 12"><rect x="2.500" y="1.500" width="10" height="8" rx="1"></rect><rect x="5.500" y="4.500" width="4" height="2" fill="#c3d0dd"></rect></svg></button>
          <button type="button" aria-label="Close"><svg viewBox="0 0 14 12"><path d="M2 1.500h3l2 2.500 2-2.500h3L9 6l3 4.500H9L7 8l-2 2.500H2L5 6z"></path></svg></button>
        </div>
      </div>
      <div class="body"><slot></slot></div>`;
  }
}

@customElement("app-root")
export class AppRoot extends LitElement {
  static styles = css`
    :host { display: grid; grid-template-columns: 953fr 944fr; height: 100vh; overflow: hidden; background: #000; }
    .daily { --title-height: 29px; --title-top: 4px; --title-pad: 0px; --icon-shift: -4px; --controls-right: 9px; --body-margin: 0 8px 0 0; border-right: 1px solid #2b2f36; }
    .m15 { --title-height: 23px; --title-top: 0px; --title-pad: 4px; --icon-shift: 0px; --controls-right: -17px; --body-margin: 0 0 0 2px; }
    .stack { position: relative; flex: 1; display: grid; min-width: 0; }
    .stack.d { grid-template-rows: 522fr 1px 166fr 1px 160fr 9px; border-right: 1px solid #f4f4f4; }
    .stack.m { grid-template-rows: 441fr 1px 141fr 1px 136fr 1px 135fr 9px; border-left: 1px solid #6e6e6e; padding-left: 2px; }
    .gap { background: #000; }
    .pane { position: relative; display: flex; min-height: 0; min-width: 0; }
    svg { display: block; overflow: hidden; }
    .plot { flex: 1; min-width: 0; height: 100%; box-sizing: border-box; border: 1px solid #483d8b; }
    .d .plot { border-left: 0; }
    .axis { flex: none; height: 100%; }
    .d .axis { width: 45px; }
    .m .axis { width: 28px; }
    .time { width: 100%; height: 100%; }
    .notes { position: absolute; inset: 0; width: 100%; height: 100%; pointer-events: none; }

    .rule, .series { fill: none; stroke-width: 1; shape-rendering: crispEdges; }
    .grid { stroke: #483d8b; stroke-dasharray: 3 3; }
    .tick { stroke: #483d8b; }
    .zero { stroke: #747474; }
    .level { stroke: #c0c0c0; stroke-dasharray: 3 3; }
    .sublevel { stroke: #808080; stroke-dasharray: 3 3; }
    .magenta { stroke: #f0f; stroke-dasharray: 9 3 3 3 3 3; }
    .golden { stroke: #daa520; stroke-dasharray: 3 3; }
    .khaki { stroke: #f0e68c; }
    .yellow { stroke: #ff0; }
    .red { stroke: #f00; }
    .rule.blue { stroke: #1e90ff; }
    .candle { fill: #5f9ea0; shape-rendering: crispEdges; }
    .ma { stroke-dasharray: 3 4; }
    .ma.red { stroke: #dc143c; }
    .ma.blue { stroke: #4682b4; }
    .ma.gold { stroke: #ffd700; }
    .series.zig { stroke: #ff69b4; stroke-width: 2.4; }
    .series.white2 { stroke: #fff; stroke-width: 2; }
    .white1 { stroke: #fff; }
    .red1 { stroke: #f00; }
    .series.red2 { stroke: #f00; stroke-width: 2; }
    .yel1 { stroke: #ff0; }
    .series.yel2 { stroke: #ff0; stroke-width: 2; }
    .ora1 { stroke: #ffa500; }
    .series.ora2 { stroke: #ffa500; stroke-width: 2; }
    .s-royal { stroke: #4169e1; }
    .s-royaldash { stroke: #4169e1; stroke-dasharray: 2 3; }
    .s-crim { stroke: #dc143c; stroke-dasharray: 3 3; }
    .s-pink { stroke: #ffc0cb; stroke-dasharray: 3 3; }
    .s-dodger { stroke: #1e90ff; }
    .f-royal { fill: #4169e1; }
    .f-crim { fill: #dc143c; }
    .f-pink { fill: #ffc0cb; }
    .b-purple { fill: #9932cc; }
    .b-orange { fill: #ff8c00; }
    .b-red { fill: #f00; }
    .b-dim, .fill-dim, .divider { fill: #483d8b; }
    .fill-yellow { fill: #ff0; }
    .face { fill: none; stroke: #483d8b; }
    .tag-khaki { fill: #f0e68c; }
    .tag-silver { fill: #c0c0c0; }
    .signal { fill: #000; shape-rendering: crispEdges; }
    .signal.short { stroke: #1e90ff; }
    .signal.exit { stroke: #ff0; }

    text { white-space: pre; }
    .tiny { font: 9px "Noto Sans", sans-serif; fill: #5145a0; }
    .arial11 { font: 11px "Liberation Sans", sans-serif; }
    .arial12 { font: 12px "Liberation Sans", sans-serif; }
    .arialb15 { font: bold 15px "Liberation Sans", sans-serif; }
    .quote32 { font: 32px "Liberation Sans", sans-serif; }
    .quote40 { font: 40px "Liberation Sans", sans-serif; }
    .quote66 { font: 66px "Liberation Sans", sans-serif; }
    .noto12 { font: 12px "Noto Sans", sans-serif; }
    .kana12 { font: 12px "Noto Sans CJK JP", sans-serif; }
    .hr { font: 13px "Noto Sans", sans-serif; stroke-width: .4; }
    .sigtext { font: 14px "DejaVu Sans", sans-serif; stroke-width: .6; }
    .t-short { fill: #1e90ff; stroke: #1e90ff; }
    .t-exit { fill: #ff0; stroke: #ff0; }
    .black { fill: #000; }
    .white { fill: #fff; }
    .cyan { fill: #0ff; }
    .dodger { fill: #1e90ff; stroke: #1e90ff; }
    .redtext { fill: #f00; stroke: #f00; }
    .end { text-anchor: end; }
    .mid { text-anchor: middle; }

    .note { font-family: "Noto Sans CJK JP", sans-serif; font-weight: bold; }
    .n26 { font-size: 26px; fill: #fff200; }
    .n24 { font-size: 24px; fill: #99d9ea; }
    .n20 { font-size: 20px; fill: #ffaec9; }
    .n16 { font-size: 16px; fill: #b5e61d; }
    .ring, .frame { fill: none; stroke-width: 3; }
    .frame { stroke: #fff200; }
    .lime { stroke: #b5e61d; }
    .crimson { stroke: #ed1c24; }

    button { font: 14px "DejaVu Sans", sans-serif; color: #000; border-radius: 0; padding: 0; margin: 0; box-sizing: border-box; }
    .toggles { position: absolute; top: 47px; left: 0; width: 58px; display: flex; flex-direction: column; }
    .m .toggles { left: 3px; width: 60px; }
    .toggles button { height: 25px; background: #c0c0c0; border: 2px solid #a0a0a0; border-top-color: #e0e0e0; border-left-color: #d0d0d0; -webkit-text-stroke: .5px #000; }
    .toggles button + button { height: 24px; background: #ababab; border-color: #a0a0a0 #e0e0e0 #e0e0e0 #a0a0a0; }
    .d .toggles button { border-left: 0; }
    .ms { position: absolute; top: 1px; right: 46px; display: flex; }
    .m .ms { right: 29px; }
    .ms button { width: 26px; height: 26px; background: #86e886; border: 2px solid #78dc78; border-right-color: #b6ffb6; border-bottom-color: #b6ffb6; font: bold 15px "Noto Sans", sans-serif; line-height: 20px; }
    .off { position: absolute; top: 340px; left: 3px; width: 40px; height: 20px; background: #a9a9a9; color: #fff; border: 2px solid; border-color: #909090 #e0e0e0 #e0e0e0 #909090; font: 14px/16px "Noto Sans", sans-serif; }
    .more { position: absolute; right: 28px; top: 400px; width: 46px; height: 26px; background: #a9a9a9; border: 3px solid; border-color: #b8b8b8 #e0e0e0 #e0e0e0 #b8b8b8; font: bold 14px "Liberation Sans", sans-serif; text-align: left; padding-left: 3px; }
    .more-tag { position: absolute; right: 29px; top: 409px; width: 35px; height: 12px; box-sizing: border-box; padding-right: 2px; background: #c0c0c0; font: 11px/12px "Liberation Sans", sans-serif; text-align: right; color: #000; }
    .trend-clip { position: absolute; top: 361px; left: 3px; height: 69px; overflow: hidden; }
    .trend { border-collapse: separate; border-spacing: 0; background: #808080; }
    .trend th, .trend td { padding: 0; height: 18px; border-bottom: 2px solid #707070; background: #fff; color: #000; text-align: center; line-height: 18px; }
    .trend th { width: 39px; border-right: 2px solid #707070; font: bold 13px/18px "Noto Sans", sans-serif; }
    .trend td { width: 68px; font: 13px/18px "Noto Sans CJK JP", sans-serif; }
    .trend .sell { color: #dc143c; }
    .atr { position: absolute; top: 385px; left: 37px; border-collapse: collapse; background: #141414; table-layout: fixed; width: 87px; }
    .atr th, .atr td { height: 13px; padding: 0; border: 1px solid #87cefa; color: #87cefa; font: 12px/13px "Noto Sans", sans-serif; text-align: center; }
    .atr .vr { border-color: #7fffd4; color: #7fffd4; }
    .atr svg { width: 14px; height: 11px; margin: 0 auto; fill: #ffa500; }
  `;

  render() {
    return html`
      <chart-window class="daily" heading="GBPJPY,Daily">
        <div class="stack d">
          ${pane(0, 34, dailyMain(), 898, 33, svg`${scale(898, 5, D_SCALE.filter((t) => t[1]))}${badge("b-dim", 899, 152, 41, "188.254")}`, html`
            <div class="toggles"><button type="button">TREND</button><button type="button">EXIT</button></div>`)}
          <div class="gap"></div>
          ${pane(0, 557, dailyMacd(), 898, 556, scale(898, 4, [[564, "1.631"], [639, "0.00"], [715, "-1.6145"]]), ms())}
          <div class="gap"></div>
          ${pane(0, 724, dailyRci(), 898, 723, scale(898, 3, [[731, "100"], [740, "80"], [803, "0.00"], [866, "-80"], [876, "-100"]]))}
          ${timeline(0, -2, ["5 Jul 2023", "28 Jul 2023", "21 Aug 2023", "12 Sep 2023", "4 Oct 2023", "26 Oct 2023", "16 Nov 2023", "8 Dec 2023", "3 Jan 2024", "25 Jan 2024", "16 Feb 2024", "10 Mar 2024"])}
          <svg class="notes"><g transform="translate(0 -33)">
            <text class="note n26" x="301" y="82">日足上昇トレンドの調整局面</text>
            <rect class="frame" x="657.500" y="55.500" width="76" height="133"></rect>
          </g></svg>
        </div>
      </chart-window>
      <chart-window class="m15" heading="GBPJPY,M15">
        <div class="stack m">
          ${pane(959, 28, m15Main(), 1869, 27, svg`${scale(1869, 5, M_SCALE)}${badge("b-red", 1870, 365, 30, "188.2")}${badge("b-dim", 1870, 376, 30, "188.2")}`)}
          <div class="gap"></div>
          ${pane(959, 470, m15Ma(), 1869, 469, scale(1869, 3, [[476, "0.1475"], [525, "0.00"], [602, "-0.223"]]), ms())}
          <div class="gap"></div>
          ${pane(959, 612, m15Rci(), 1869, 611, scale(1869, 3, [[618, "100"], [639, "60"], [679, "0.00"], [719, "-60"], [739, "-100"]]))}
          <div class="gap"></div>
          ${pane(959, 749, m15Pairs(), 1869, 748, scale(1869, 3, [[755, "1"], [875, "0"]]))}
          ${timeline(958, 959, ["8 Mar 2024", "8 Mar 11:00", "8 Mar 15:00", "8 Mar 19:00", "8 Mar 23:00", "11 Mar 02:00", "11 Mar 06:00", "11 Mar 10:00", "11 Mar 14:00", "11 Mar 18:00", "11 Mar 22:00", "12 Mar 02:00"])}
          <div class="toggles"><button type="button">TREND</button><button type="button">EXIT</button></div>
          <button type="button" class="off">OFF</button>
          <div class="trend-clip">
            <table class="trend">
              <tr><th scope="row">M15</th><td>なし</td></tr>
              <tr><th scope="row">H1</th><td>なし</td></tr>
              <tr><th scope="row">H4</th><td>なし</td></tr>
              <tr><th scope="row">D1</th><td class="sell">ダイバー</td></tr>
            </table>
          </div>
          <table class="atr">
            <tr><th scope="col"><svg viewBox="0 0 12 10"><path d="M11 0L3 4.500l3 .8L1 10l8-4.800-3-.8z"></path></svg></th><th scope="col">ATR</th><th scope="col" class="vr">VR</th></tr>
            <tr><th scope="row">Now</th><td>6.5</td><td class="vr">0.8</td></tr>
            <tr><th scope="row">Pre</th><td>6.3</td><td class="vr">0.8</td></tr>
          </table>
          <button type="button" class="more">E</button>
          <span class="more-tag">188.0</span>
          <svg class="notes"><g transform="translate(-956 -27)">
            <text class="note n24" x="1646" y="68">ポンド円15分足</text>
            <text class="note n16" x="1187" y="65">ショートサイン</text>
            <text class="note n16" x="1305" y="126">ショートサイン</text>
            <text class="note n16" x="1423" y="200">ショートサイン</text>
            <text class="note n20" x="1213" y="400">利確30pips</text>
            <text class="note n20" x="1364" y="439">利確41pips</text>
            <text class="note n20" x="1561" y="491">利確10pips</text>
            <circle class="ring lime" cx="1240" cy="103" r="31"></circle>
            <circle class="ring lime" cx="1334" cy="162" r="30"></circle>
            <circle class="ring lime" cx="1392" cy="162" r="30"></circle>
            <circle class="ring lime" cx="1474" cy="236" r="30"></circle>
            <circle class="ring crimson" cx="1263" cy="337" r="29"></circle>
            <circle class="ring crimson" cx="1411" cy="399" r="27"></circle>
            <circle class="ring crimson" cx="1535" cy="470" r="25"></circle>
          </g></svg>
        </div>
      </chart-window>`;
  }
}
